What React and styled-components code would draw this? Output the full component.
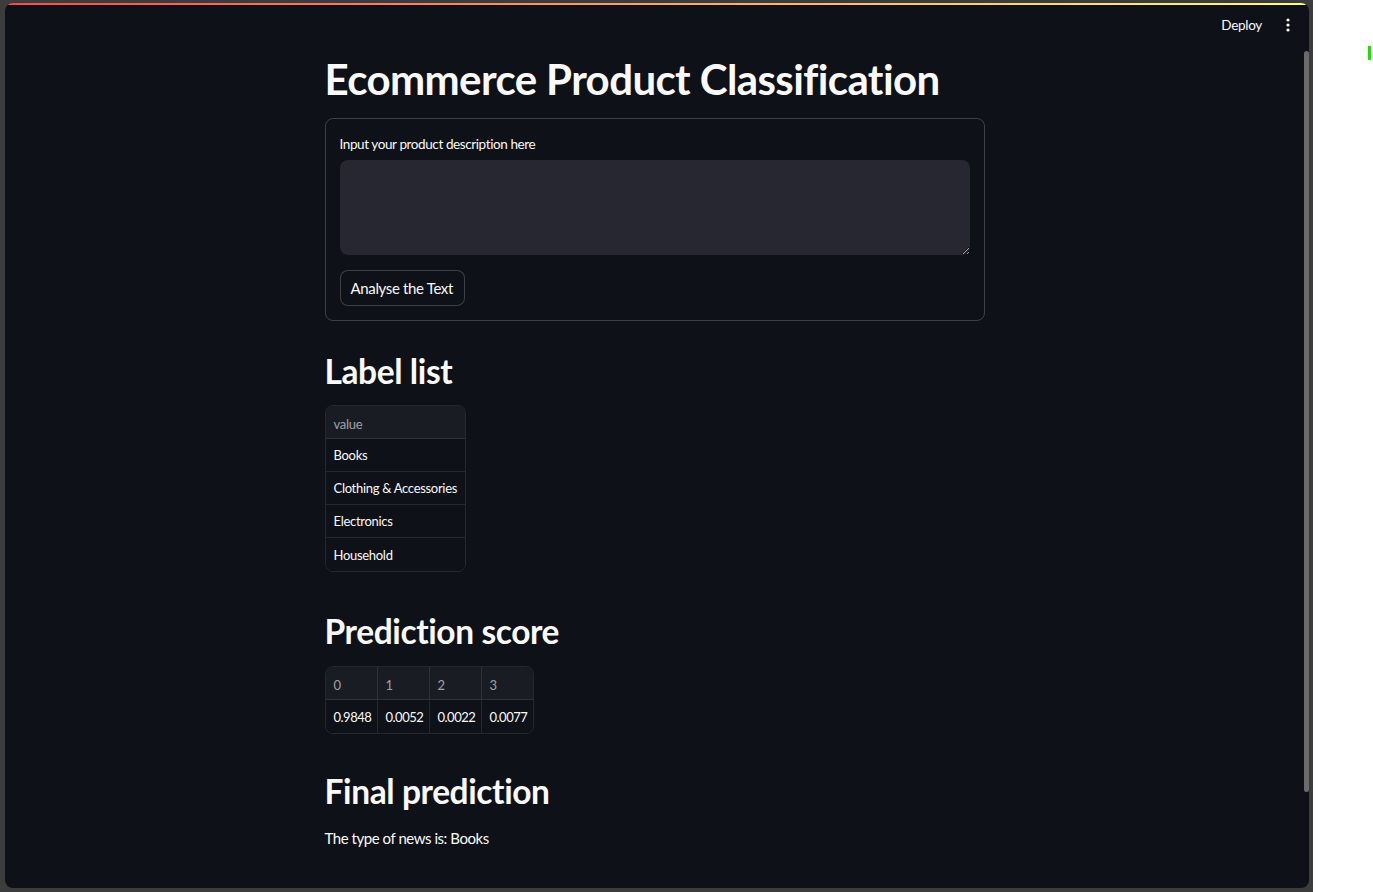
import React from "react";
import styled, { createGlobalStyle } from "styled-components";

const Global = createGlobalStyle`
  html, body { margin: 0; padding: 0; background: #ffffff; }
  body { font-family: "Source Sans Pro", Lato, "Noto Sans", sans-serif; color-scheme: dark; }
  * { box-sizing: border-box; }
`;

const Screen = styled.div`
  display: flex;
  width: 1373px;
  height: 892px;
  overflow: hidden;
`;

const Frame = styled.div`
  width: 1313px;
  height: 892px;
  background: #3c3c3c;
  padding: 3px 4px 4px 5px;
  display: flex;
`;

const Side = styled.div`
  flex: 1;
  background: #ffffff;
  display: flex;
  justify-content: flex-end;
  padding: 46px 2px 0 0;
`;

const GreenMark = styled.div`
  width: 3px;
  height: 14px;
  background: #22dd00;
`;

const Window = styled.div`
  position: relative;
  flex: 1;
  background: #0e1117;
  border-radius: 8px;
  overflow: hidden;
  display: flex;
  flex-direction: column;
`;

const Decoration = styled.div`
  height: 2px;
  background: linear-gradient(90deg, rgb(255, 75, 75), rgb(255, 253, 128));
`;

const Header = styled.div`
  height: 40px;
  display: flex;
  align-items: center;
  justify-content: flex-end;
  padding-right: 19px;
  gap: 24px;
`;

const DeployBtn = styled.span`
  font-size: 13.5px;
  letter-spacing: -0.3px;
  color: #fafafa;
`;

const Thumb = styled.div`
  position: absolute;
  right: 0;
  top: 48px;
  width: 5px;
  height: 741px;
  background: #6b6b6b;
  border-radius: 3px;
`;

const Main = styled.div`
  flex: 1;
  display: flex;
  justify-content: center;
  padding: 8px 5px 0 0;
`;

const Column = styled.div`
  width: 660px;
  display: flex;
  flex-direction: column;
  color: #fafafa;
`;

const Title = styled.h1`
  margin: 0;
  font-size: 42px;
  line-height: 52px;
  font-weight: 700;
  letter-spacing: -0.6px;
  white-space: nowrap;
`;

const Heading = styled.h2`
  margin: ${(p) => p.$top}px 0 0;
  font-size: 33.5px;
  line-height: 44px;
  font-weight: 700;
  letter-spacing: -0.4px;
`;

const Form = styled.div`
  margin-top: 13px;
  border: 1px solid rgba(250, 250, 250, 0.2);
  border-radius: 8px;
  padding: 15px 14px 14px;
  display: flex;
  flex-direction: column;
  align-items: flex-start;
`;

const Label = styled.label`
  font-size: 13.5px;
  line-height: 20px;
  letter-spacing: -0.4px;
`;

const TextArea = styled.textarea`
  margin-top: 6px;
  width: 100%;
  height: 95px;
  background: #262730;
  border: none;
  border-radius: 8px;
  color: #fafafa;
  font: inherit;
  padding: 8px 12px;
  outline: none;
`;

const Button = styled.button`
  margin-top: 15px;
  height: 36px;
  padding: 0 11px 0 10px;
  background: #0e1117;
  border: 1px solid rgba(250, 250, 250, 0.2);
  border-radius: 8px;
  color: #fafafa;
  font-family: inherit;
  font-size: 15px;
  letter-spacing: -0.35px;
`;

const Table = styled.div`
  margin-top: ${(p) => p.$top}px;
  align-self: flex-start;
  display: grid;
  grid-template-columns: ${(p) => p.$cols};
  border: 1px solid rgba(250, 250, 250, 0.1);
  border-radius: 8px;
  overflow: hidden;
`;

const Cell = styled.div`
  height: 33px;
  display: flex;
  align-items: center;
  padding: ${(p) => (p.$head ? "3px 0 0 8px" : "0 0 0 8px")};
  font-size: 13px;
  letter-spacing: ${(p) => (p.$num ? "-0.5px" : "-0.3px")};
  white-space: nowrap;
  color: ${(p) => (p.$head ? "rgba(250,250,250,0.6)" : "#fafafa")};
  background: ${(p) => (p.$head ? "#1a1c24" : "#0e1117")};
  border-bottom: ${(p) => (p.$last ? "none" : "1px solid rgba(250,250,250,0.1)")};
  border-right: ${(p) => (p.$edge ? "none" : "1px solid rgba(250,250,250,0.1)")};
`;

const Paragraph = styled.p`
  margin: 13px 0 0;
  font-size: 15px;
  line-height: 24px;
  letter-spacing: -0.45px;
`;

const Kebab = () => (
  <svg width="4" height="14" viewBox="0 0 4 14">
    <circle cx="2" cy="2" r="1.6" fill="#fafafa" />
    <circle cx="2" cy="7" r="1.6" fill="#fafafa" />
    <circle cx="2" cy="12" r="1.6" fill="#fafafa" />
  </svg>
);

const labels = ["Books", "Clothing & Accessories", "Electronics", "Household"];
const scores = ["0.9848", "0.0052", "0.0022", "0.0077"];

export default function App() {
  return (
    <Screen>
      <Global />
      <Frame>
        <Window>
          <Decoration />
          <Header>
            <DeployBtn>Deploy</DeployBtn>
            <Kebab />
          </Header>
          <Main>
            <Column>
              <Title>Ecommerce Product Classification</Title>
              <Form>
                <Label>Input your product description here</Label>
                <TextArea />
                <Button>Analyse the Text</Button>
              </Form>
              <Heading $top={28}>Label list</Heading>
              <Table $top={12} $cols="139px">
                <Cell $head $edge>value</Cell>
                {labels.map((l, i) => (
                  <Cell key={l} $edge $last={i === labels.length - 1}>{l}</Cell>
                ))}
              </Table>
              <Heading $top={37}>Prediction score</Heading>
              <Table $top={13} $cols="52px 52px 52px 51px">
                {scores.map((_, i) => (
                  <Cell key={"h" + i} $head $edge={i === 3}>{i}</Cell>
                ))}
                {scores.map((s, i) => (
                  <Cell key={s} $num $last $edge={i === 3}>{s}</Cell>
                ))}
              </Table>
              <Heading $top={35}>Final prediction</Heading>
              <Paragraph>The type of news is: Books</Paragraph>
            </Column>
          </Main>
          <Thumb />
        </Window>
      </Frame>
      <Side>
        <GreenMark />
      </Side>
    </Screen>
  );
}
